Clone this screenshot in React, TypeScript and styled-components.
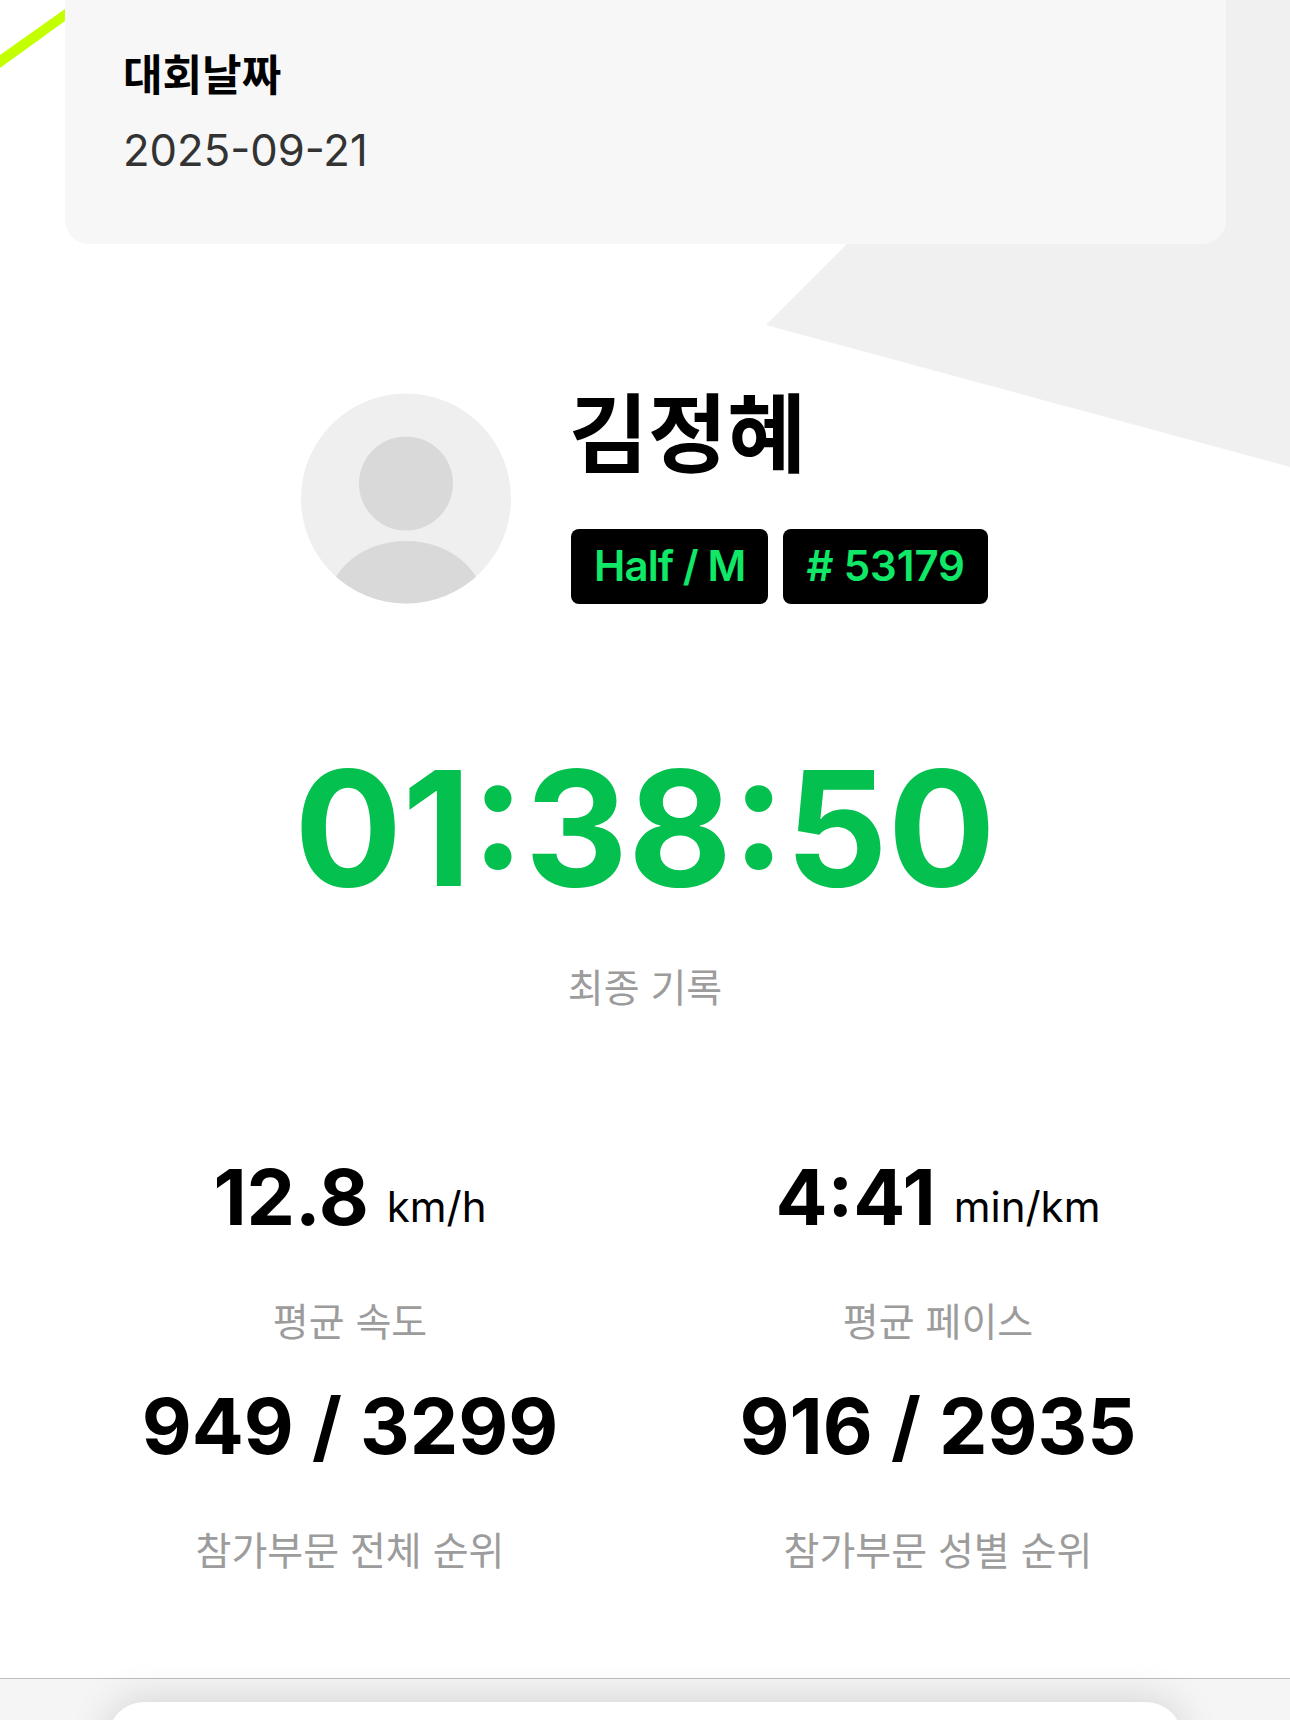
import React from "react";
import styled, { createGlobalStyle } from "styled-components";

const Global = createGlobalStyle`
  html, body { margin: 0; padding: 0; background: #fff; }
  body { font-family: Inter, "Noto Sans CJK KR", sans-serif; }
`;

const Page = styled.div`
  position: relative;
  width: 1290px;
  height: 1720px;
  overflow: hidden;
  background: #fff;
  display: flex;
  flex-direction: column;
`;

const Decor = styled.svg`
  position: absolute;
  inset: 0;
  width: 1290px;
  height: 1720px;
`;

const Content = styled.div`
  position: relative;
  display: flex;
  flex-direction: column;
  flex: 1;
`;

const InfoCard = styled.section`
  margin: 0 64px 0 65px;
  height: 244px;
  box-sizing: border-box;
  padding: 50px 58px 0;
  background: #f7f7f7;
  border-radius: 0 0 24px 24px;
`;

const InfoLabel = styled.div`
  font-size: 43px;
  font-weight: 700;
  line-height: 50px;
  color: #000;
`;

const InfoValue = styled.div`
  margin-top: 25px;
  font-size: 43.6px;
  line-height: 52px;
  color: #333;
`;

const Profile = styled.section`
  margin-top: 149px;
  padding-left: 301px;
  display: flex;
  gap: 60px;
`;

const Avatar = styled.svg`
  width: 210px;
  height: 211px;
  display: block;
`;

const ProfileText = styled.div`
  display: flex;
  flex-direction: column;
  justify-content: space-between;
  height: 211px;
`;

const Name = styled.h1`
  margin: 0 0 0 -2px;
  font-size: 86px;
  font-weight: 700;
  line-height: 84px;
  color: #000;
`;

const Badges = styled.div`
  display: flex;
  gap: 15px;
`;

const Badge = styled.span<{ $tracking: number }>`
  height: 75px;
  box-sizing: border-box;
  padding: 0 23px 3px;
  display: flex;
  align-items: center;
  background: #000;
  border-radius: 8px;
  color: #10e868;
  font-size: 42px;
  font-weight: 600;
  white-space: pre;
  letter-spacing: ${(p) => p.$tracking}px;
`;

const Record = styled.section`
  margin-top: 134px;
  display: flex;
  flex-direction: column;
  align-items: center;
`;

const Time = styled.div`
  font-size: 160px;
  font-weight: 700;
  line-height: 180px;
  color: #03c04f;
`;

const Caption = styled.div`
  font-size: 39px;
  line-height: 48px;
  color: #9c9c9c;
`;

const RecordCaption = styled(Caption)`
  margin-top: 46px;
`;

const StatsGrid = styled.section`
  margin: 139px 0 0 56px;
  width: 1176px;
  display: grid;
  grid-template-columns: 1fr 1fr;
  row-gap: 34px;
`;

const Stat = styled.div`
  display: flex;
  flex-direction: column;
  align-items: center;
`;

const StatValue = styled.div`
  font-size: 77px;
  font-weight: 700;
  line-height: 92px;
  color: #000;
  white-space: pre;
`;

const StatUnit = styled.span`
  font-size: 42px;
  font-weight: 400;
  line-height: 1;
  margin-left: 18px;
  vertical-align: 3px;
`;

const StatCaption = styled(Caption)`
  margin-top: 55px;
`;

const Footer = styled.footer`
  position: absolute;
  left: 0;
  right: 0;
  top: 1678px;
  height: 42px;
  box-sizing: border-box;
  border-top: 1px solid #bdbdbd;
  background: #f5f5f5;
  padding: 23px 108px 0;
`;

const Sheet = styled.div`
  height: 100px;
  background: #fff;
  border-radius: 36px 36px 0 0;
  box-shadow: 0 -2px 40px rgba(0, 0, 0, 0.14);
`;

const stats = [
  { value: "12.8", unit: "km/h", label: "평균 속도" },
  { value: "4:41", unit: "min/km", label: "평균 페이스" },
  { value: "949 / 3299", label: "참가부문 전체 순위" },
  { value: "916 / 2935", label: "참가부문 성별 순위" },
];

export default function App() {
  return (
    <Page>
      <Global />
      <Decor viewBox="0 0 1290 1720">
        <polygon points="766,325 1091,0 1290,0 1290,467" fill="#f0f0f0" />
        <polygon points="0,55 65,9 65,21 0,68" fill="#c4ff00" />
      </Decor>
      <Content>
        <InfoCard>
          <InfoLabel>대회날짜</InfoLabel>
          <InfoValue>2025-09-21</InfoValue>
        </InfoCard>
        <Profile>
          <Avatar viewBox="0 0 210 211">
            <defs>
              <clipPath id="avatar-clip">
                <circle cx="105" cy="105.5" r="105" />
              </clipPath>
            </defs>
            <circle cx="105" cy="105.5" r="105" fill="#efefef" />
            <g clipPath="url(#avatar-clip)">
              <circle cx="105" cy="90.5" r="47" fill="#d9d9d9" />
              <ellipse cx="105" cy="212" rx="78" ry="64" fill="#d9d9d9" />
            </g>
          </Avatar>
          <ProfileText>
            <Name>김정혜</Name>
            <Badges>
              <Badge $tracking={-0.9}>Half / M</Badge>
              <Badge $tracking={-0.1}># 53179</Badge>
            </Badges>
          </ProfileText>
        </Profile>
        <Record>
          <Time>01:38:50</Time>
          <RecordCaption>최종 기록</RecordCaption>
        </Record>
        <StatsGrid>
          {stats.map((s) => (
            <Stat key={s.label}>
              <StatValue>
                {s.value}
                {s.unit && <StatUnit>{s.unit}</StatUnit>}
              </StatValue>
              <StatCaption>{s.label}</StatCaption>
            </Stat>
          ))}
        </StatsGrid>
      </Content>
      <Footer>
        <Sheet />
      </Footer>
    </Page>
  );
}
